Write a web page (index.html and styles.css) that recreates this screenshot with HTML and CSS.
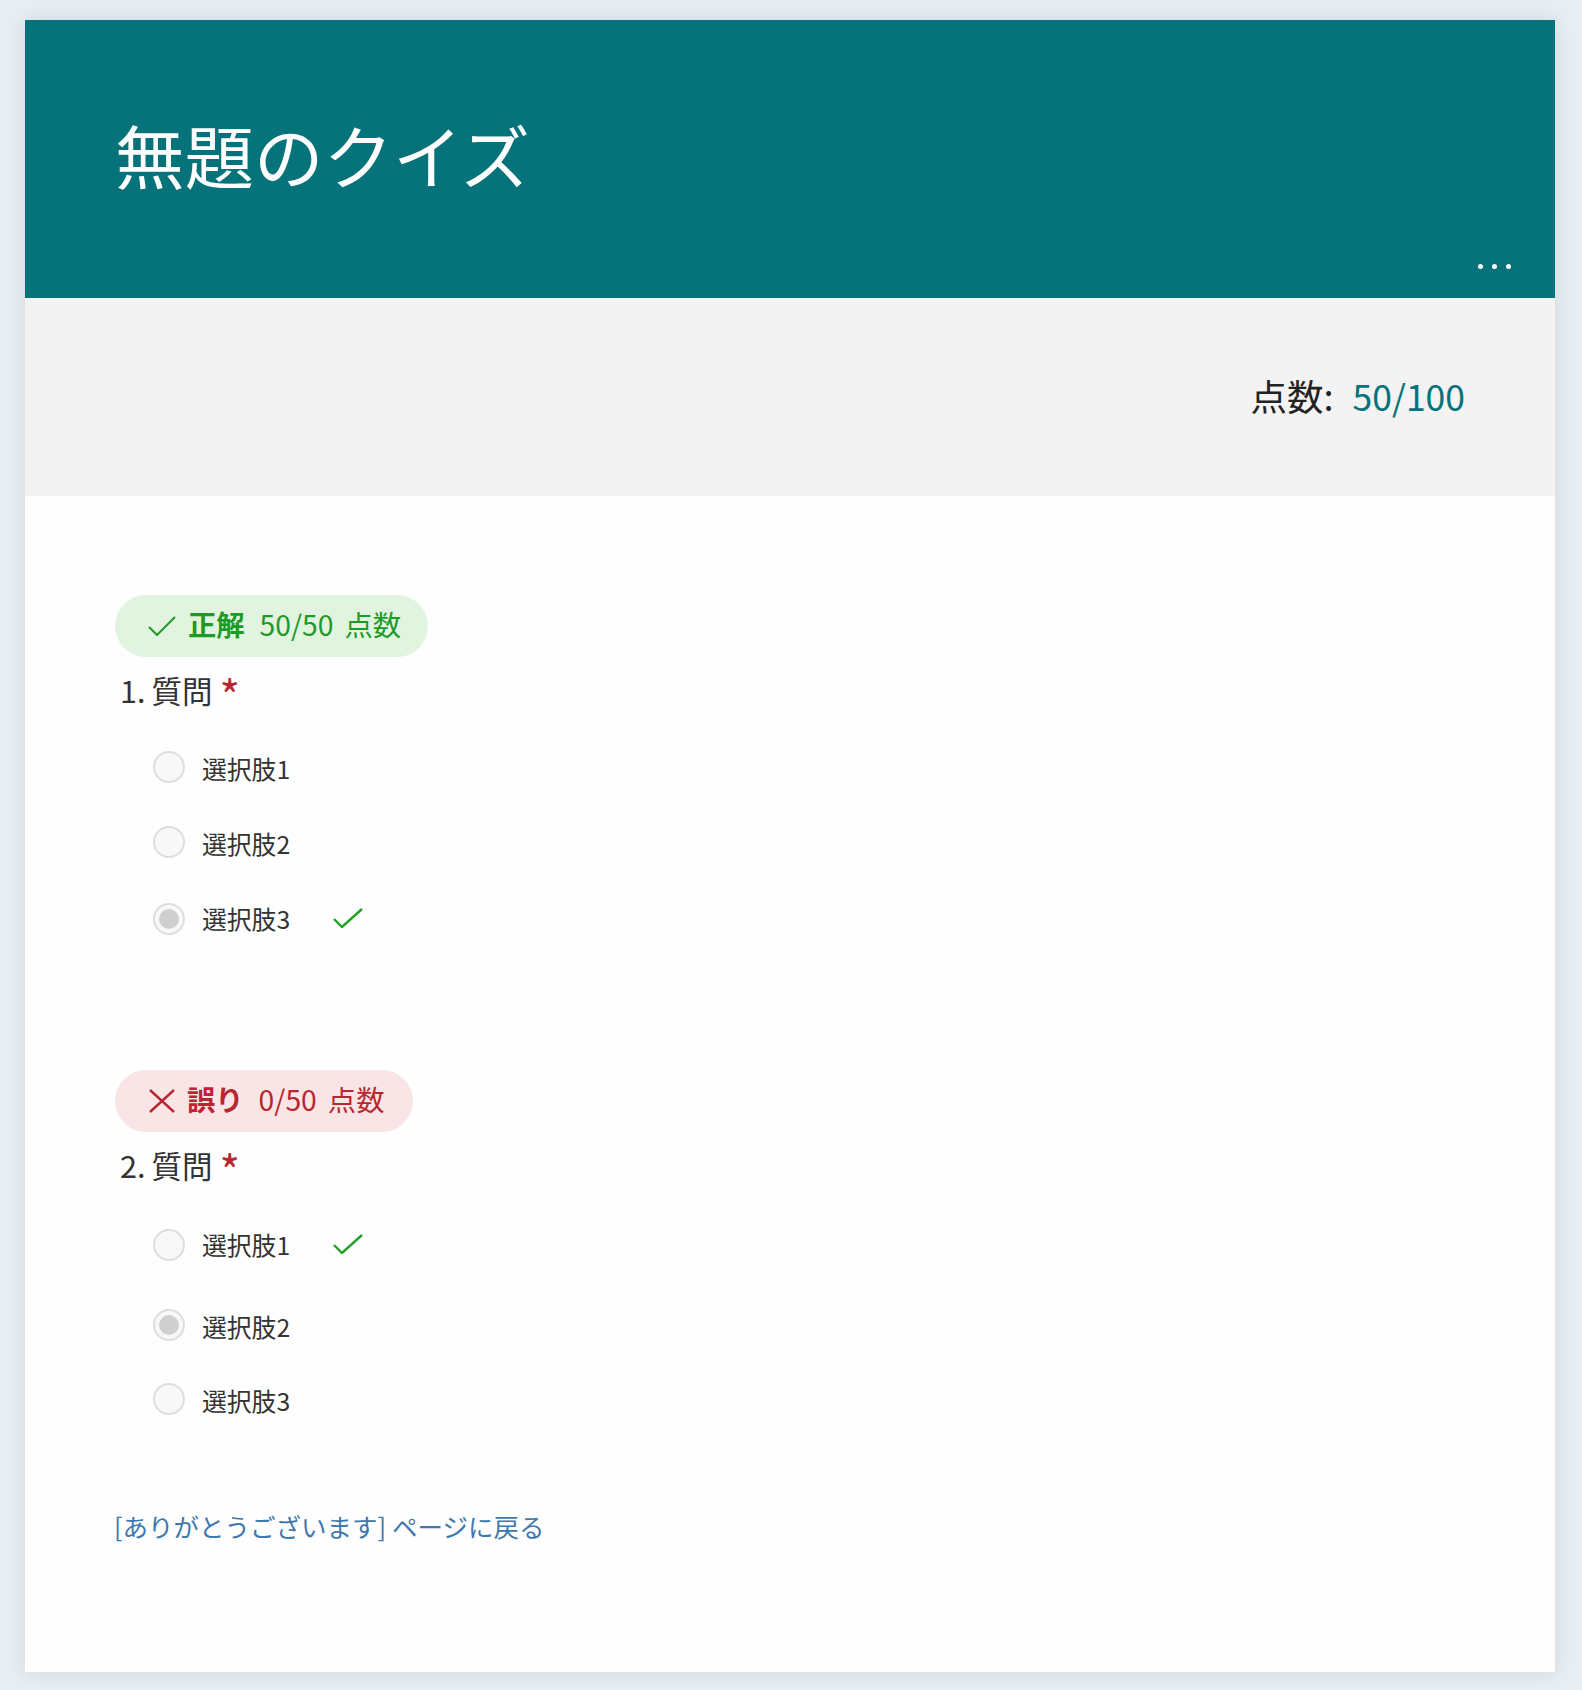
FILE: index.html
```html
<!DOCTYPE html>
<html lang="ja">
<head>
<meta charset="utf-8">
<title>無題のクイズ</title>
<link rel="stylesheet" href="styles.css">
</head>
<body>
<main class="card">
  <header class="banner">
    <h1 class="title">無題のクイズ</h1>
    <div class="dots"><i></i><i></i><i></i></div>
  </header>
  <section class="score">
    <span class="score-label">点数:</span><span class="score-value">50/100</span>
  </section>
  <section class="content">
    <article class="question q1">
      <div class="pill pill-ok">
        <svg class="pill-icon" viewBox="0 0 28 20"><path d="M1 11l8 8L27 1" fill="none" stroke="currentColor" stroke-width="2"/></svg>
        <b>正解</b><span class="pts">50/50</span><span class="pts-label">点数</span>
      </div>
      <div class="qtitle"><span class="num">1.</span><span>質問</span><span class="req">*</span></div>
      <div class="opt"><span class="radio"></span><span class="opt-text">選択肢1</span></div>
      <div class="opt"><span class="radio"></span><span class="opt-text">選択肢2</span></div>
      <div class="opt opt-marked"><span class="radio on"></span><span class="opt-text">選択肢3</span>
        <svg class="opt-check" viewBox="0 0 30 20"><path d="M1 11l8 8L29 1" fill="none" stroke="currentColor" stroke-width="2.4"/></svg></div>
    </article>
    <article class="question q2">
      <div class="pill pill-bad">
        <svg class="pill-icon cross" viewBox="0 0 26 24"><path d="M1 1l24 22M25 1L1 23" fill="none" stroke="currentColor" stroke-width="2.4"/></svg>
        <b>誤り</b><span class="pts">0/50</span><span class="pts-label">点数</span>
      </div>
      <div class="qtitle"><span class="num">2.</span><span>質問</span><span class="req">*</span></div>
      <div class="opt opt-marked"><span class="radio"></span><span class="opt-text">選択肢1</span>
        <svg class="opt-check" viewBox="0 0 30 20"><path d="M1 11l8 8L29 1" fill="none" stroke="currentColor" stroke-width="2.4"/></svg></div>
      <div class="opt"><span class="radio on"></span><span class="opt-text">選択肢2</span></div>
      <div class="opt"><span class="radio"></span><span class="opt-text">選択肢3</span></div>
    </article>
    <a class="back" href="#">[ありがとうございます] ページに戻る</a>
  </section>
</main>
</body>
</html>
```
FILE: styles.css
```css
* { box-sizing: border-box; }
html, body { margin: 0; }
body {
  height: 1690px;
  padding: 20px 27px 18px 25px;
  background: #e8eff3;
  font-family: "Noto Sans CJK JP", "Noto Sans", sans-serif;
  color: #333;
  overflow: hidden;
}
.card {
  height: 1652px;
  background: #fefefe;
  box-shadow: 0 0 18px rgba(120, 140, 155, .25);
  display: flex;
  flex-direction: column;
}
.banner {
  height: 278px;
  background: #06727a;
  padding: 0 44px 29px 90px;
  display: flex;
  flex-direction: column;
  justify-content: space-between;
}
.title {
  margin: 0;
  padding-top: 90px;
  font-size: 69.5px;
  line-height: 88px;
  font-weight: 400;
  color: #fff;
  white-space: nowrap;
}
.dots { display: flex; justify-content: flex-end; gap: 9px; }
.dots i { width: 5px; height: 5px; border-radius: 50%; background: #fff; display: block; }
.score {
  height: 198px;
  background: #f3f3f3;
  display: flex;
  align-items: center;
  justify-content: flex-end;
  padding: 0 90px 2px 0;
  line-height: 48px;
  color: #222;
}
.score-label { font-size: 36.5px; }
.score-value { font-size: 35.5px; color: #06727a; margin-left: 19px; }
.content { padding: 99px 0 0 90px; }
.q2 { margin-top: 113px; }
.pill {
  display: inline-flex;
  align-items: center;
  height: 62px;
  padding: 0 27px 0 33px;
  border-radius: 31px;
  font-size: 28.3px;
  line-height: 38px;
  white-space: nowrap;
}
.pill b, .pts, .pts-label { margin-top: -4px; }
.pill b { font-weight: 700; }
.pill-ok { background: #e1f4df; color: #1f9a26; }
.pill-bad { background: #fae5e6; color: #b8272f; }
.pill-icon { width: 28px; height: 20px; margin-right: 12px; display: block; }
.pill-icon.cross { width: 26px; height: 24px; margin: 0 12px 0 1px; }
.pts { margin-left: 15px; }
.pts-label { margin-left: 11px; }
.pill-bad { padding-right: 29px; }
.qtitle {
  display: flex;
  align-items: center;
  height: 42px;
  margin-top: 12px;
  padding-left: 5px;
  font-size: 30.5px;
  line-height: 42px;
  color: #333;
}
.num { margin-right: 6px; }
.req { color: #b8272f; margin-left: 7px; font-size: 44px; line-height: 42px; height: 42px; margin-top: 8px; }
.opt {
  display: flex;
  align-items: center;
  height: 74.4px;
  padding-left: 38px;
}
.opt-marked { height: 76.4px; }
.q2 .opt-marked { margin-bottom: 6px; }
.qtitle + .opt { margin-top: 21px; }
.radio {
  width: 32px;
  height: 32px;
  flex: none;
  border-radius: 50%;
  border: 2px solid #ddd;
  background: #f8f8f8;
  margin-top: -4px;
  display: flex;
  align-items: center;
  justify-content: center;
}
.opt-marked .radio { margin-top: 0; }
.radio.on::after {
  content: "";
  width: 20px;
  height: 20px;
  border-radius: 50%;
  background: #cfcfcf;
}
.opt-text { margin-left: 17px; padding-bottom: 2px; font-size: 24.8px; line-height: 36px; color: #333; }
.opt-check { width: 30px; height: 20px; margin-left: 43px; margin-top: -1px; color: #22a02a; display: block; }
.q2 .opt-check { margin-top: -3px; }
.back {
  display: block;
  margin: 69px 0 0 -1px;
  font-size: 25.5px;
  line-height: 38px;
  color: #3f78ac;
  text-decoration: none;
}
```
